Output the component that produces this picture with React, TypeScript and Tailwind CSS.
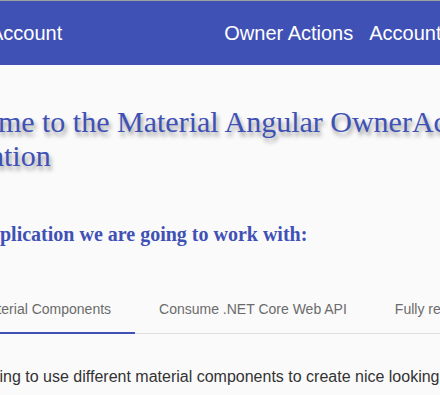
import React from "react";

export default function App() {
  const sans = { fontFamily: '"Liberation Sans", Arial, sans-serif' };
  const serif = { fontFamily: '"Liberation Serif", "Times New Roman", serif' };
  return (
    <div className="w-[440px] h-[395px] overflow-hidden bg-[#fafafa] relative">
      <header
        className="h-[65px] border-t border-[#9e9e9e] bg-[#3f51b5] text-white flex items-center whitespace-nowrap text-[20px]"
        style={sans}
      >
        <span className="shrink-0 ml-[-10px]">Account</span>
        <span className="shrink-0 ml-[162px]">Owner Actions</span>
        <span className="shrink-0 ml-[16px]">Account</span>
      </header>

      <div className="whitespace-nowrap">
        <h1
          className="mt-[40px] text-[30px] leading-[34px] text-[#3f51b5] [text-shadow:2px_4px_4px_rgba(0,0,0,0.38)]"
          style={serif}
        >
          <span className="block ml-[-78px]">Welcome to the Material Angular OwnerAccount</span>
          <span className="block ml-[-91px]">Application</span>
        </h1>

        <h3
          className="mt-[50px] ml-[-125px] text-[20px] font-bold leading-[22px] text-[#3f51b5]"
          style={serif}
        >
          Parts of the application we are going to work with:
        </h3>

        <div
          className="mt-[41px] h-[48px] flex border-b border-[#e0e0e0] text-[14px] text-[#6b6b6b]"
          style={sans}
        >
          <div className="shrink-0 ml-[-46px] px-[24px] flex items-center relative">
            Material Components
            <div className="absolute left-0 right-0 bottom-[-1px] h-[2px] bg-[#3f51b5]" />
          </div>
          <div className="shrink-0 px-[24px] flex items-center">Consume .NET Core Web API</div>
          <div className="shrink-0 px-[24px] flex items-center">Fully responsive application</div>
        </div>

        <p
          className="mt-[31px] ml-[-74px] text-[16px] leading-[24px] text-[#333333]"
          style={sans}
        >
          We are going to use different material components to create nice looking pages
        </p>
      </div>
    </div>
  );
}
